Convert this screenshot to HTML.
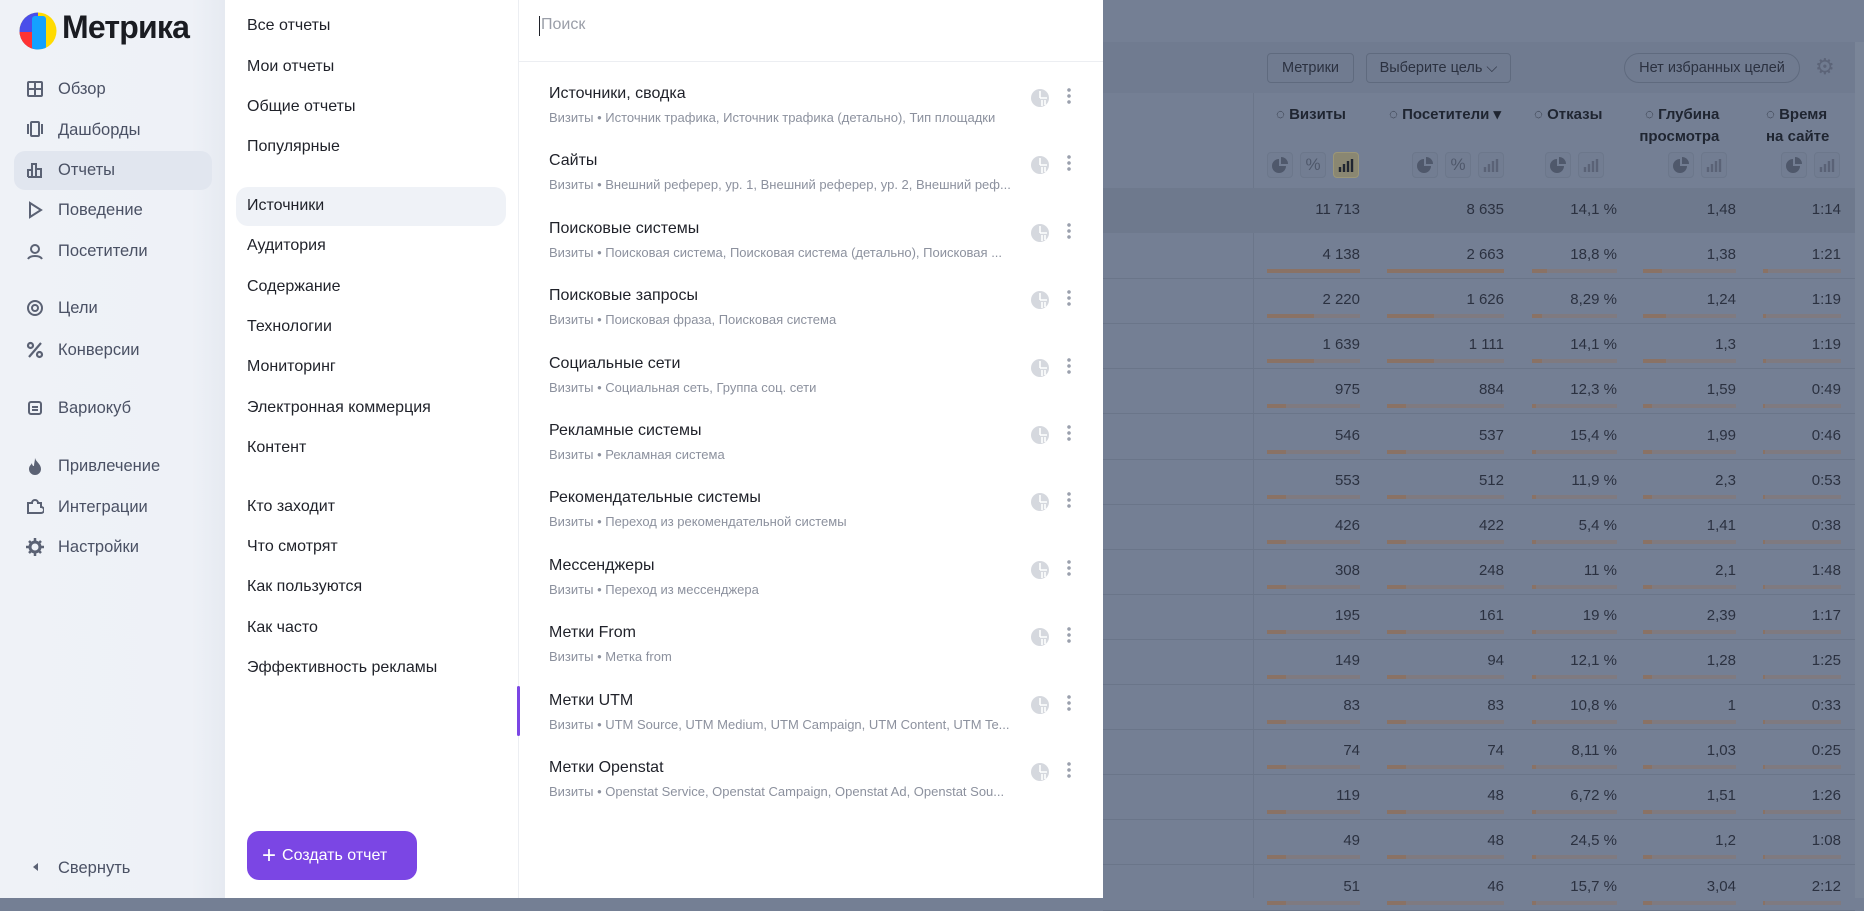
<!DOCTYPE html>
<html><head><meta charset="utf-8"><style>
*{margin:0;padding:0;box-sizing:border-box}
body{width:1864px;height:898px;overflow:hidden;position:relative;font-family:"Liberation Sans",sans-serif;background:#747f94}
.a{position:absolute;white-space:nowrap}
#side{left:0;top:0;width:225px;height:898px;background:linear-gradient(90deg,#eff2f7,#eef1f7 85%,#e6eaf1)}
.nav{left:58px;font-size:16.5px;color:#4a5164;line-height:20px}
.ic{left:26px;width:18px;height:18px}
#col2{left:225px;top:0;width:293px;height:898px;background:#fff}
.c2{left:247px;font-size:16px;color:#1f2129;line-height:20px}
#col3{left:518px;top:0;width:585px;height:898px;background:#fff;border-left:1px solid #eceef2}
.t{left:549px;font-size:16px;color:#1f2129;line-height:20px}
.s{left:549px;font-size:13px;color:#8c919e;line-height:16px}
#tbl{left:1103px;top:0;width:761px;height:898px;background:#747f94}
.n{font-size:15px;color:#2b3140;text-align:right;width:120px;line-height:18px}
.bar{height:4px;background:#7f7a80}
.bf{height:4px;background:#8a7265}
.h{font-size:15px;font-weight:bold;color:#1f2531;line-height:22px}
.ib{width:26px;height:26px;border:1px solid #6c778b;border-radius:4px;background:#727d92}
</style></head><body>
<div id="side" class="a"></div>
<svg class="a" style="left:19px;top:12px" width="38" height="38" viewBox="0 0 38 38"><defs><clipPath id="c"><circle cx="19" cy="19" r="18.5"/></clipPath></defs><g clip-path="url(#c)"><rect width="38" height="38" fill="#ffdb00"/><rect x="0" y="0" width="19" height="38" fill="#4a4eea"/><rect x="0" y="20" width="14" height="18" fill="#f33"/><rect x="13" y="4" width="14" height="34" rx="3" fill="#14a1ff"/></g></svg>
<div class="a" style="left:62px;top:9px;font-size:32px;font-weight:bold;color:#1a1c22;letter-spacing:-0.8px">Метрика</div>
<div class="a" style="left:14px;top:151px;width:198px;height:39px;background:#e1e6ef;border-radius:11px"></div>
<svg class="a ic" style="top:80px" viewBox="0 0 18 18" fill="none" stroke="#5b6274" stroke-width="2"><rect x="2" y="2" width="14" height="14" rx="1"/><path d="M9 2v14M2 9h14"/></svg>
<div class="a nav" style="top:79px">Обзор</div>
<svg class="a ic" style="top:120px" viewBox="0 0 18 18" fill="none" stroke="#5b6274" stroke-width="2"><rect x="5" y="2" width="8" height="14" rx="1"/><path d="M2 4v10M16 4v10"/></svg>
<div class="a nav" style="top:120px">Дашборды</div>
<svg class="a ic" style="top:161px" viewBox="0 0 18 18" fill="none" stroke="#5b6274" stroke-width="2"><path d="M2 16V9h4v7M6 16V3h4v13M10 16V8h5v8H2"/></svg>
<div class="a nav" style="top:160px">Отчеты</div>
<svg class="a ic" style="top:201px" viewBox="0 0 18 18" fill="none" stroke="#5b6274" stroke-width="2"><path d="M4 2l11 7-11 7z"/></svg>
<div class="a nav" style="top:200px">Поведение</div>
<svg class="a ic" style="top:242px" viewBox="0 0 18 18" fill="none" stroke="#5b6274" stroke-width="2"><circle cx="9" cy="7" r="4"/><path d="M2 17c2-4 12-4 14 0"/></svg>
<div class="a nav" style="top:241px">Посетители</div>
<svg class="a ic" style="top:299px" viewBox="0 0 18 18" fill="none" stroke="#5b6274" stroke-width="2"><circle cx="9" cy="9" r="7"/><circle cx="9" cy="9" r="3"/></svg>
<div class="a nav" style="top:298px">Цели</div>
<svg class="a ic" style="top:341px" viewBox="0 0 18 18" fill="none" stroke="#5b6274" stroke-width="2.2"><circle cx="4.5" cy="4.5" r="2.5"/><circle cx="13.5" cy="13.5" r="2.5"/><path d="M15 2L3 16"/></svg>
<div class="a nav" style="top:340px">Конверсии</div>
<svg class="a ic" style="top:399px" viewBox="0 0 18 18" fill="none" stroke="#5b6274" stroke-width="2"><rect x="3" y="3" width="12" height="12" rx="2"/><path d="M6 8h6M6 11h6"/></svg>
<div class="a nav" style="top:398px">Вариокуб</div>
<svg class="a ic" style="top:457px" viewBox="0 0 18 18"><path d="M9 1c1 4 6 6 6 11a6 6 0 0 1-12 0c0-3 2-4 3-6 0 2 1 3 2 3 0-3 1-5 1-8z" fill="#5b6274"/></svg>
<div class="a nav" style="top:456px">Привлечение</div>
<svg class="a ic" style="top:497px" viewBox="0 0 18 18" fill="none" stroke="#5b6274" stroke-width="2"><path d="M2 16V6h4a3 3 0 0 1 6 0h3v4a3 3 0 0 1 0 6z"/></svg>
<div class="a nav" style="top:497px">Интеграции</div>
<svg class="a ic" style="top:538px" viewBox="0 0 18 18"><circle cx="9" cy="9" r="5" fill="none" stroke="#5b6274" stroke-width="3"/><path d="M9 0v4M9 14v4M0 9h4M14 9h4M3 3l3 3M12 12l3 3M15 3l-3 3M3 15l3-3" stroke="#5b6274" stroke-width="2.5"/></svg>
<div class="a nav" style="top:537px">Настройки</div>
<div class="a" style="left:33px;top:863px;width:0;height:0;border-top:4px solid transparent;border-bottom:4px solid transparent;border-right:5px solid #5b6274"></div>
<div class="a nav" style="top:858px">Свернуть</div>

<div id="col2" class="a"></div>
<div class="a" style="left:236px;top:187px;width:270px;height:39px;background:#eff2f7;border-radius:12px"></div>
<div class="a c2" style="top:16px">Все отчеты</div>
<div class="a c2" style="top:57px">Мои отчеты</div>
<div class="a c2" style="top:97px">Общие отчеты</div>
<div class="a c2" style="top:137px">Популярные</div>
<div class="a c2" style="top:196px">Источники</div>
<div class="a c2" style="top:236px">Аудитория</div>
<div class="a c2" style="top:277px">Содержание</div>
<div class="a c2" style="top:317px">Технологии</div>
<div class="a c2" style="top:357px">Мониторинг</div>
<div class="a c2" style="top:398px">Электронная коммерция</div>
<div class="a c2" style="top:438px">Контент</div>
<div class="a c2" style="top:497px">Кто заходит</div>
<div class="a c2" style="top:537px">Что смотрят</div>
<div class="a c2" style="top:577px">Как пользуются</div>
<div class="a c2" style="top:618px">Как часто</div>
<div class="a c2" style="top:658px">Эффективность рекламы</div>
<div class="a" style="left:247px;top:831px;width:170px;height:49px;background:#7b46e4;border-radius:12px;color:#fff;font-size:16px;line-height:49px;padding-left:15px"><span style="font-size:24px;vertical-align:-3px;margin-right:6px">+</span>Создать отчет</div>

<div id="col3" class="a"></div>
<div class="a" style="left:539px;top:16px;width:1px;height:20px;background:#1f2129"></div>
<div class="a" style="left:541px;top:16px;font-size:16px;color:#9a9ea8">Поиск</div>
<div class="a" style="left:518px;top:61px;width:585px;height:1px;background:#eceef2"></div>
<div class="a" style="left:517px;top:686px;width:3px;height:50px;background:#7b46e4;border-radius:2px"></div>
<div id="list"></div>

<div id="tbl" class="a"></div>
<div class="a" style="left:1103px;top:42px;width:752px;height:51px;background:#707b90"></div>
<div class="a" style="left:1855px;top:42px;width:9px;height:856px;background:#7a8598"></div>
<div class="a" style="left:1253px;top:93px;width:1px;height:805px;background:#6b768a"></div>
<div class="a" style="left:1267px;top:53px;width:87px;height:30px;border:1px solid #5f6a7e;border-radius:4px;font-size:14.5px;color:#2b3140;text-align:center;line-height:28px">Метрики</div>
<div class="a" style="left:1366px;top:53px;width:145px;height:30px;border:1px solid #5f6a7e;border-radius:4px;font-size:14.5px;color:#2b3140;text-align:center;line-height:28px">Выберите цель ⌵</div>
<div class="a" style="left:1624px;top:53px;width:176px;height:30px;border:1px solid #5f6a7e;border-radius:15px;font-size:14.5px;color:#2b3140;text-align:center;line-height:28px">Нет избранных целей</div>
<div class="a" style="left:1815px;top:54px;font-size:22px;color:#5c6478">⚙</div>
<div class="a h" style="left:1276px;top:104px">◌ Визиты</div>
<div class="a h" style="left:1389px;top:104px">◌ Посетители ▾</div>
<div class="a h" style="left:1534px;top:104px">◌ Отказы</div>
<div class="a h" style="left:1645px;top:104px;text-align:right">◌ Глубина<br><span style="margin-left:-20px">просмотра</span></div>
<div class="a h" style="left:1766px;top:104px">◌ Время<br>на сайте</div>
<div id="icons"></div>
<div class="a" style="left:1103px;top:188px;width:752px;height:45px;background:#6e798d"></div>
<div id="rows"></div>
<script>
var L=[["Источники, сводка","Источник трафика, Источник трафика (детально), Тип площадки"],["Сайты","Внешний реферер, ур. 1, Внешний реферер, ур. 2, Внешний реф..."],["Поисковые системы","Поисковая система, Поисковая система (детально), Поисковая ..."],["Поисковые запросы","Поисковая фраза, Поисковая система"],["Социальные сети","Социальная сеть, Группа соц. сети"],["Рекламные системы","Рекламная система"],["Рекомендательные системы","Переход из рекомендательной системы"],["Мессенджеры","Переход из мессенджера"],["Метки From","Метка from"],["Метки UTM","UTM Source, UTM Medium, UTM Campaign, UTM Content, UTM Te..."],["Метки Openstat","Openstat Service, Openstat Campaign, Openstat Ad, Openstat Sou..."]];
var h="";L.forEach(function(r,i){var y=84+i*67.4;h+='<div class="a t" style="top:'+y+'px">'+r[0]+'</div><div class="a s" style="top:'+(y+26)+'px">Визиты • '+r[1]+'</div><svg class="a" style="left:1031px;top:'+(y+5)+'px" width="18" height="18"><circle cx="9" cy="9" r="9" fill="#d5d8de"/><path d="M9 9V2M9 9h7M11 11v6M14 11v5" stroke="#fff" stroke-width="1.6"/></svg><div class="a" style="left:1067px;top:'+(y+3)+'px;width:4px;height:18px;background:radial-gradient(circle,#9aa0ad 1.6px,transparent 2px) 0 0/4px 6px"></div>'});
document.getElementById("list").outerHTML=h;
var pie='<svg width="16" height="16" viewBox="0 0 16 16" style="margin-top:4px"><path d="M7 2a7 7 0 1 0 7 7H7z" fill="#4f586b"/><path d="M9 0v7h7a7 7 0 0 0-7-7z" fill="#4f586b"/></svg>';
var pct='<span style="font-size:17px;font-weight:normal">%</span>';
function bars(c){return '<svg width="16" height="14" viewBox="0 0 16 14" style="margin-top:5px"><path d="M2 14V9M6 14V6M10 14V3M14 14V1" stroke="'+c+'" stroke-width="2.4"/></svg>'}
var ib="",cols=[[1267,["p","%","b"]],[1412,["p","%","b"]],[1545,["p","b"]],[1668,["p","b"]],[1781,["p","b"]]];
cols.forEach(function(c){c[1].forEach(function(g,j){var act=(c[0]==1267&&j==2);var inner=g=="p"?pie:g=="%"?pct:bars(act?"#1f2531":"#5a6276");ib+='<div class="a ib" style="left:'+(c[0]+j*33)+'px;top:152px;'+(act?'background:#8a8772;border-color:#9b9677;':'')+'color:#4f586b;text-align:center;line-height:24px">'+inner+'</div>'})});
document.getElementById("icons").outerHTML=ib;
var R=[["11 713","8 635","14,1 %","1,48","1:14"],["4 138","2 663","18,8 %","1,38","1:21"],["2 220","1 626","8,29 %","1,24","1:19"],["1 639","1 111","14,1 %","1,3","1:19"],["975","884","12,3 %","1,59","0:49"],["546","537","15,4 %","1,99","0:46"],["553","512","11,9 %","2,3","0:53"],["426","422","5,4 %","1,41","0:38"],["308","248","11 %","2,1","1:48"],["195","161","19 %","2,39","1:17"],["149","94","12,1 %","1,28","1:25"],["83","83","10,8 %","1","0:33"],["74","74","8,11 %","1,03","0:25"],["119","48","6,72 %","1,51","1:26"],["49","48","24,5 %","1,2","1:08"],["51","46","15,7 %","3,04","2:12"]];
var rx=[1360,1504,1617,1736,1841],bx=[[1267,93],[1387,117],[1532,85],[1643,93],[1763,78]];
var s="";R.forEach(function(r,i){var y=201+i*45.1;r.forEach(function(v,j){s+='<div class="a n" style="left:'+(rx[j]-120)+'px;top:'+y+'px">'+v+'</div>';if(i>0){var w=bx[j][1],f=i==1?[1,1,.18,.2,.06][j]:Math.max(.03,[.5,.4,.12,.25,.04][j]*(i<4?1:.4));s+='<div class="a bar" style="left:'+bx[j][0]+'px;top:'+(y+23)+'px;width:'+w+'px"></div><div class="a bf" style="left:'+bx[j][0]+'px;top:'+(y+23)+'px;width:'+Math.round(w*f)+'px"></div>'}});if(i>0)s+='<div class="a" style="left:1103px;top:'+(y+32)+'px;width:752px;height:1px;background:#6a7589"></div>'});
document.getElementById("rows").outerHTML=s;
</script>
</body></html>
